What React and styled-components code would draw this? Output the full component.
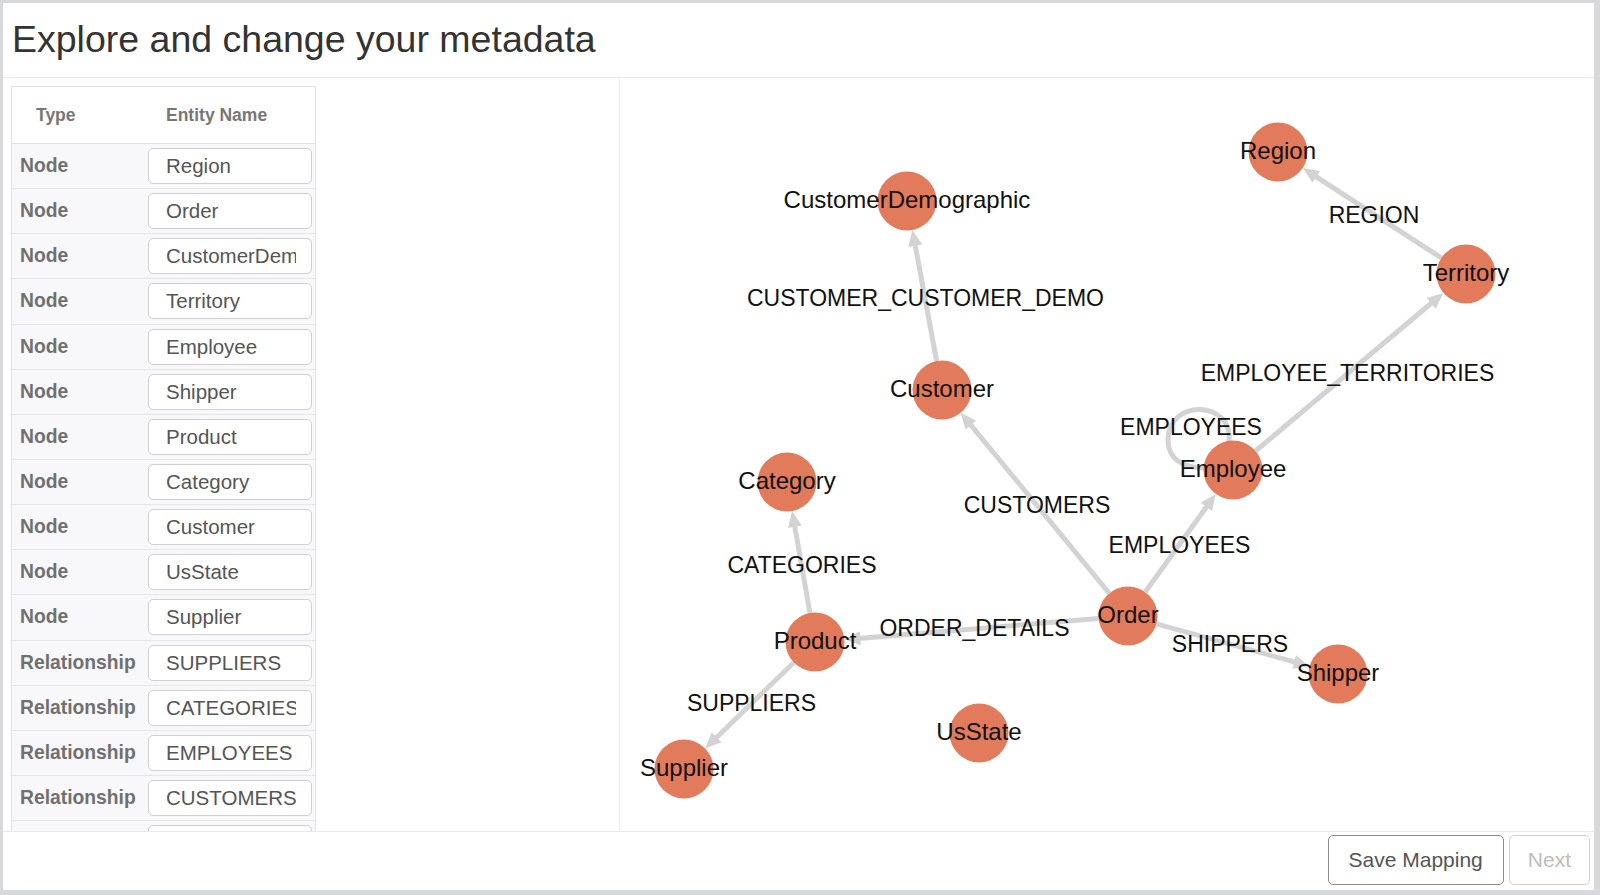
import React from 'react'
import styled, { createGlobalStyle } from 'styled-components'

const GlobalStyle = createGlobalStyle`
  html, body {
    margin: 0;
    padding: 0;
  }
  body {
    background: #d8d9dd;
    font-family: "Liberation Sans", Arial, Helvetica, sans-serif;
  }
`

const Frame = styled.div`
  height: 895px;
  padding: 3px 6px 5px 3px;
  box-sizing: border-box;
`

const Card = styled.div`
  height: 100%;
  background: #fff;
  display: flex;
  flex-direction: column;
`

const Header = styled.header`
  height: 75px;
  box-sizing: border-box;
  border-bottom: 1px solid #e8e8ee;
  padding-left: 9px;
  display: flex;
  align-items: center;
`

const Title = styled.h1`
  margin: 0;
  font-size: 37.5px;
  font-weight: normal;
  line-height: 1;
  color: #333;
`

const Main = styled.div`
  flex: 1;
  display: flex;
  min-height: 0;
`

const MappingPane = styled.div`
  width: 617px;
  box-sizing: border-box;
  border-right: 1px solid #ececf1;
  padding: 8px 0 0 8px;
  overflow: hidden;
`

const Table = styled.div`
  width: 305px;
  box-sizing: border-box;
  border: 1px solid #e2e2e6;
  border-bottom: none;
`

const HeadRow = styled.div`
  display: grid;
  grid-template-columns: 136px 164px;
  height: 57px;
  box-sizing: border-box;
  border-bottom: 1px solid #e2e2e6;
  align-items: center;
  background: #fff;
`

const HeadCell = styled.div`
  padding-left: ${p => p.$pad}px;
  font-size: 17.5px;
  font-weight: bold;
  color: #777;
`

const Row = styled.div`
  display: grid;
  grid-template-columns: 136px 164px;
  height: 45.15px;
  box-sizing: border-box;
  border-bottom: 1px solid #e6e6ea;
  align-items: center;
  background: #f8f8fa;
`

const TypeCell = styled.div`
  padding-left: 8px;
  font-size: 19.3px;
  font-weight: bold;
  color: #707070;
`

const NameInput = styled.input`
  width: 164px;
  height: 36px;
  box-sizing: border-box;
  border: 1px solid #cfcfd4;
  border-radius: 5px;
  padding: 0 15px 0 17px;
  font: 20.5px "Liberation Sans", Arial, sans-serif;
  color: #555;
  background: #fff;
  outline: none;
`

const GraphPane = styled.div`
  flex: 1;
  min-width: 0;
`

const GraphSvg = styled.svg`
  display: block;
  width: 100%;
  height: 100%;
`

const EdgeLine = styled.path`
  fill: none;
  stroke: #d3d3d3;
  stroke-width: 5;
`

const Arrow = styled.polygon`
  fill: #d3d3d3;
`

const NodeDot = styled.circle`
  fill: #e27b5c;
`

const Label = styled.text`
  font-family: "Liberation Sans", Arial, sans-serif;
  font-size: ${p => p.$size}px;
  fill: #111;
  text-anchor: middle;
`

const Footer = styled.footer`
  height: 59px;
  box-sizing: border-box;
  border-top: 1px solid #e8e8ee;
  display: flex;
  justify-content: flex-end;
  align-items: flex-start;
  gap: 5px;
  padding: 3px 4px 0 0;
`

const Button = styled.button`
  height: 50px;
  padding: 0 ${p => (p.disabled ? 18 : 20)}px;
  font: 21px "Liberation Sans", Arial, sans-serif;
  color: ${p => (p.disabled ? '#bdbdbd' : '#555')};
  background: #fff;
  border: 1px solid ${p => (p.disabled ? '#d2d2d2' : '#8a8a8a')};
  border-radius: 5px;
`

const rows = [
  ['Node', 'Region'],
  ['Node', 'Order'],
  ['Node', 'CustomerDemographic'],
  ['Node', 'Territory'],
  ['Node', 'Employee'],
  ['Node', 'Shipper'],
  ['Node', 'Product'],
  ['Node', 'Category'],
  ['Node', 'Customer'],
  ['Node', 'UsState'],
  ['Node', 'Supplier'],
  ['Relationship', 'SUPPLIERS'],
  ['Relationship', 'CATEGORIES'],
  ['Relationship', 'EMPLOYEES'],
  ['Relationship', 'CUSTOMERS'],
  ['Relationship', 'EMPLOYEES'],
  ['Relationship', 'ORDER_DETAILS'],
  ['Relationship', 'SHIPPERS'],
  ['Relationship', 'REGION'],
  ['Relationship', 'EMPLOYEE_TERRITORIES'],
  ['Relationship', 'CUSTOMER_CUSTOMER_DEMO'],
]

const nodes = {
  Region: { x: 1278, y: 152 },
  CustomerDemographic: { x: 907, y: 201 },
  Territory: { x: 1466, y: 274 },
  Customer: { x: 942, y: 390 },
  Employee: { x: 1233, y: 470 },
  Category: { x: 787, y: 482 },
  Order: { x: 1128, y: 616 },
  Product: { x: 815, y: 642 },
  Shipper: { x: 1338, y: 674 },
  UsState: { x: 979, y: 733 },
  Supplier: { x: 684, y: 769 },
}

// [from, to, label, label offset]
const edges = [
  ['Territory', 'Region', 'REGION', [2, 2]],
  ['Customer', 'CustomerDemographic', 'CUSTOMER_CUSTOMER_DEMO', [1, 2]],
  ['Employee', 'Territory', 'EMPLOYEE_TERRITORIES', [-2, 1]],
  ['Order', 'Customer', 'CUSTOMERS', [2, 2]],
  ['Order', 'Employee', 'EMPLOYEES', [-1, 2]],
  ['Product', 'Category', 'CATEGORIES', [1, 3]],
  ['Order', 'Product', 'ORDER_DETAILS', [3, -1]],
  ['Order', 'Shipper', 'SHIPPERS', [-3, -1]],
  ['Product', 'Supplier', 'SUPPLIERS', [2, -3]],
]

const R = 29.5
const HEAD = 16
const HALF = 7

function geometry(from, to) {
  const a = nodes[from]
  const b = nodes[to]
  const dx = b.x - a.x
  const dy = b.y - a.y
  const len = Math.hypot(dx, dy)
  const ux = dx / len
  const uy = dy / len
  const tip = [b.x - ux * R, b.y - uy * R]
  const base = [tip[0] - ux * HEAD, tip[1] - uy * HEAD]
  const start = [a.x + ux * R, a.y + uy * R]
  const arrow = [
    tip,
    [base[0] - uy * HALF, base[1] + ux * HALF],
    [base[0] + uy * HALF, base[1] - ux * HALF],
  ]
  return {
    d: `M ${start[0]} ${start[1]} L ${base[0] + ux * 2} ${base[1] + uy * 2}`,
    arrow: arrow.map(p => p.join(',')).join(' '),
    mid: [(a.x + b.x) / 2, (a.y + b.y) / 2],
  }
}

const Graph = () => (
  <GraphSvg viewBox="620 78 974 753" preserveAspectRatio="xMinYMin meet">
    {edges.map(([f, t]) => {
      const g = geometry(f, t)
      return (
        <g key={f + t}>
          <EdgeLine d={g.d} />
          <Arrow points={g.arrow} />
        </g>
      )
    })}
    <EdgeLine d="M 1229 442 C 1234 400, 1168 398, 1168 440 C 1168 460, 1184 468, 1205 468" />
    {Object.entries(nodes).map(([name, p]) => (
      <NodeDot key={name} cx={p.x} cy={p.y} r={R} />
    ))}
    {Object.entries(nodes).map(([name, p]) => (
      <Label key={name} $size={24} x={p.x} y={p.y} dy="0.3em">{name}</Label>
    ))}
    {edges.map(([f, t, label, off]) => {
      const g = geometry(f, t)
      return (
        <Label key={label + f} $size={23} x={g.mid[0] + off[0]} y={g.mid[1] + off[1]} dy="0.36em">
          {label}
        </Label>
      )
    })}
    <Label $size={23} x={1191} y={427} dy="0.36em">EMPLOYEES</Label>
  </GraphSvg>
)

export default function App() {
  return (
    <>
      <GlobalStyle />
      <Frame>
        <Card>
          <Header>
            <Title>Explore and change your metadata</Title>
          </Header>
          <Main>
            <MappingPane>
              <Table>
                <HeadRow>
                  <HeadCell $pad={24}>Type</HeadCell>
                  <HeadCell $pad={18}>Entity Name</HeadCell>
                </HeadRow>
                {rows.map(([type, name], i) => (
                  <Row key={i}>
                    <TypeCell>{type}</TypeCell>
                    <NameInput defaultValue={name} />
                  </Row>
                ))}
              </Table>
            </MappingPane>
            <GraphPane>
              <Graph />
            </GraphPane>
          </Main>
          <Footer>
            <Button>Save Mapping</Button>
            <Button disabled>Next</Button>
          </Footer>
        </Card>
      </Frame>
    </>
  )
}
